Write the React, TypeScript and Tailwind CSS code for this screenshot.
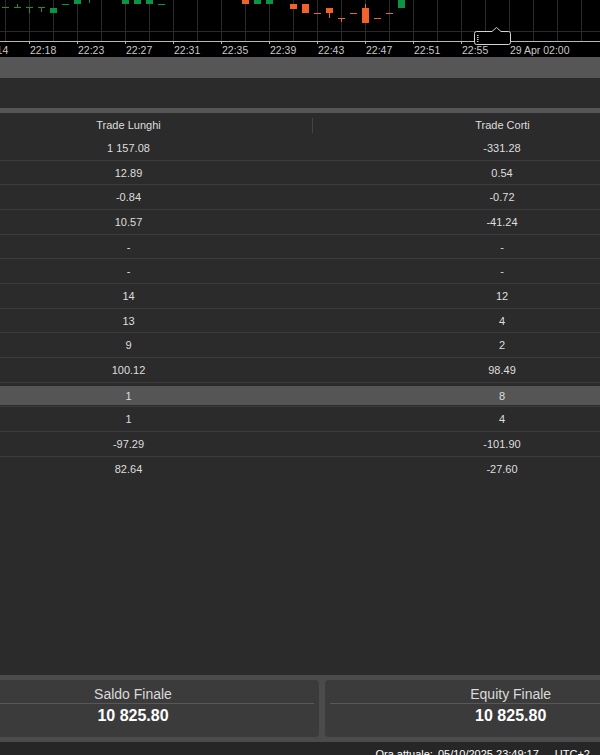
import React from "react";

const G = "#0b9444";
const O = "#f1612b";

type Candle = { k: number; c: string; t: number; b: number; wt?: number; wb?: number };

const candles: Candle[] = [
  { k: 0, c: G, t: 7, b: 8 },
  { k: 1, c: G, t: 7, b: 8, wt: 4 },
  { k: 2, c: G, t: 7, b: 8, wb: 13 },
  { k: 3, c: G, t: 7, b: 8, wb: 12 },
  { k: 4, c: G, t: 8, b: 13 },
  { k: 5, c: G, t: 4, b: 5 },
  { k: 6, c: G, t: -1, b: 4 },
  { k: 7, c: G, t: -6, b: -1, wb: 3 },
  { k: 10, c: G, t: -1, b: 4 },
  { k: 11, c: G, t: -1, b: 4 },
  { k: 12, c: G, t: -1, b: 4 },
  { k: 13, c: G, t: 4, b: 5 },
  { k: 20, c: O, t: -1, b: 4 },
  { k: 21, c: G, t: -1, b: 4 },
  { k: 22, c: G, t: -1, b: 4 },
  { k: 24, c: O, t: 4, b: 9 },
  { k: 25, c: O, t: 4, b: 13 },
  { k: 26, c: O, t: 13, b: 14 },
  { k: 27, c: O, t: 8, b: 13, wb: 18 },
  { k: 28, c: O, t: 18, b: 19, wb: 22 },
  { k: 29, c: O, t: 13, b: 14 },
  { k: 30, c: O, t: 8, b: 23, wt: 4 },
  { k: 31, c: O, t: 18, b: 19 },
  { k: 32, c: O, t: 13, b: 14 },
  { k: 33, c: G, t: -1, b: 8 },
];

const labels: [number, string][] = [
  [-18, "22:14"],
  [30, "22:18"],
  [78, "22:23"],
  [126, "22:27"],
  [174, "22:31"],
  [222, "22:35"],
  [270, "22:39"],
  [318, "22:43"],
  [366, "22:47"],
  [414, "22:51"],
  [462, "22:55"],
  [510, "29 Apr 02:00"],
];

function Chart() {
  const grid = Array.from({ length: 26 }, (_, n) => 5.5 + 24 * n);
  return (
    <div className="h-[57px] shrink-0 bg-black">
      <svg width="600" height="57" className="block">
        {grid.map((x) => (
          <line key={x} x1={x} y1={0} x2={x} y2={41} stroke="#2a2a2a" strokeWidth={1} />
        ))}
        <line x1={0} y1={31.5} x2={600} y2={31.5} stroke="#2a2a2a" strokeWidth={1} />
        {candles.map((cd) => {
          const cx = 12 * cd.k + 5.5;
          return (
            <g key={cd.k}>
              {cd.wt !== undefined && (
                <line x1={cx} y1={cd.wt} x2={cx} y2={cd.t} stroke={cd.c} strokeWidth={1} />
              )}
              {cd.wb !== undefined && (
                <line x1={cx} y1={cd.b} x2={cx} y2={cd.wb} stroke={cd.c} strokeWidth={1} />
              )}
              <rect x={12 * cd.k + 2} y={cd.t} width={7} height={cd.b - cd.t} fill={cd.c} />
            </g>
          );
        })}
        <line x1={0} y1={41.5} x2={600} y2={41.5} stroke="#b8b8b8" strokeWidth={1} />
        {labels.map(([x]) => (
          <line key={"t" + x} x1={x - 0.5} y1={41} x2={x - 0.5} y2={44} stroke="#b8b8b8" strokeWidth={1} />
        ))}
        {labels.map(([x, s]) => (
          <text
            key={"l" + x}
            x={x}
            y={54}
            fill="#c8c8c8"
            fontSize={10.5}
            fontFamily="'Liberation Sans', Arial, sans-serif"
          >
            {s}
          </text>
        ))}
        <path
          d="M476.5 31.5 H492 L496.5 27.5 L501 31.5 H508.5 Q510.5 31.5 510.5 33.5 V42.5 Q510.5 44.5 508.5 44.5 H476.5 Q474.5 44.5 474.5 42.5 V33.5 Q474.5 31.5 476.5 31.5 Z"
          fill="#000"
          stroke="#d4d4d4"
          strokeWidth={1}
        />
        {[35, 37, 39, 41].map((y) => (
          <rect key={y} x={477} y={y} width={1.5} height={1} fill="#d4d4d4" />
        ))}
      </svg>
    </div>
  );
}

const rows: [string, string][] = [
  ["1 157.08", "-331.28"],
  ["12.89", "0.54"],
  ["-0.84", "-0.72"],
  ["10.57", "-41.24"],
  ["-", "-"],
  ["-", "-"],
  ["14", "12"],
  ["13", "4"],
  ["9", "2"],
  ["100.12", "98.49"],
  ["1", "8"],
  ["1", "4"],
  ["-97.29", "-101.90"],
  ["82.64", "-27.60"],
];

function Card({ title, value }: { title: string; value: string }) {
  return (
    <div className="w-[372px] shrink-0 rounded-[4px] bg-[#3b3b3b] pt-[5.5px]">
      <div className="text-center text-[14px] leading-[16px] text-[#dadada]">{title}</div>
      <div className="mx-[5px] mt-[1px] h-px bg-[#585858]" />
      <div className="mt-[2px] text-center text-[16px] font-bold leading-[20px] text-white">{value}</div>
    </div>
  );
}

export default function App() {
  return (
    <div
      className="flex h-[755px] w-[600px] flex-col overflow-hidden bg-[#2b2b2b]"
      style={{ fontFamily: "'Liberation Sans', Arial, sans-serif" }}
    >
      <Chart />
      <div className="h-[21px] shrink-0 bg-[#565656]" />
      <div className="h-[30px] shrink-0 bg-[#2b2b2b]" />
      <div className="h-[5.33px] shrink-0 bg-[#565656]" />
      <div className="ml-[-55px] flex h-[22.67px] shrink-0 items-center pt-[1px] text-[11px] text-[#dedede]">
        <div className="w-[367px] shrink-0 text-center">Trade Lunghi</div>
        <div className="flex w-[380px] shrink-0 items-center">
          <div className="h-[15px] w-px bg-[#444]" />
          <div className="flex-1 text-center">Trade Corti</div>
        </div>
      </div>
      {rows.map(([a, b], i) => {
        const hl = i === 10;
        const last = i === rows.length - 1;
        return (
          <div
            key={i}
            className={
              "h-[24.67px] shrink-0 " + (last ? "" : "border-b border-[#3c3c3c]")
            }
          >
            <div
              className={
                "ml-[-55px] flex pt-[1px] text-[11px] text-[#dedede] " +
                (hl ? "mt-[3.3px] h-[19.3px] w-[760px] bg-[#555555]" : "h-full")
              }
            >
              <div className="flex w-[367px] shrink-0 items-center justify-center">{a}</div>
              <div className="flex w-[380px] shrink-0 items-center justify-center">{b}</div>
            </div>
          </div>
        );
      })}
      <div className="flex-1" />
      <div className="shrink-0 bg-[#4b4b4b] py-[5px]">
        <div className="ml-[-53px] flex h-[57px] gap-[5.7px]">
          <Card title="Saldo Finale" value="10 825.80" />
          <Card title="Equity Finale" value="10 825.80" />
        </div>
      </div>
      <div className="h-[13px] shrink-0 overflow-hidden whitespace-nowrap bg-[#262626] pr-[10px] pt-[6px] text-right text-[11px] leading-[12px] text-white">
        <span>Ora attuale:</span>
        <span className="ml-[5px]">05/10/2025 23:49:17</span>
        <span className="ml-[16px]">UTC+2</span>
      </div>
    </div>
  );
}
